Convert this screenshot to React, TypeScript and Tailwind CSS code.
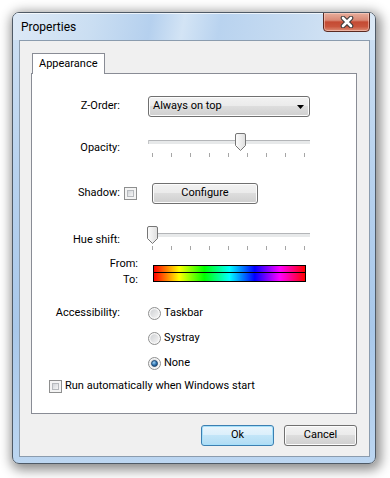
import React from 'react';

const font = "font-['Roboto','Noto_Sans',sans-serif] text-[11px] text-black";

function Slider({ thumbX, id }: { thumbX: number; id: string }) {
  const ticks = Array.from({ length: 9 }, (_, i) => 4 + 19 * i);
  return (
    <svg width="162" height="24" className="overflow-visible">
      <defs>
        <linearGradient id={id} x1="0" y1="0" x2="1" y2="0">
          <stop offset="0" stopColor="#fdfdfd" />
          <stop offset="1" stopColor="#dedede" />
        </linearGradient>
      </defs>
      <rect x="0" y="7" width="162" height="4" fill="#e7e9ea" />
      <line x1="0" y1="7.5" x2="162" y2="7.5" stroke="#b3b5b8" />
      <line x1="0.5" y1="7" x2="0.5" y2="11" stroke="#c4c6c8" />
      {ticks.map((x) => (
        <rect key={x} x={x} y="20" width="1" height="4" fill="#a6a6a6" />
      ))}
      <path
        transform={`translate(${thumbX} 0)`}
        d="M0.5 2 Q0.5 0.5 2 0.5 H9 Q10.5 0.5 10.5 2 V12.5 L5.5 17.5 L0.5 12.5 Z"
        fill={`url(#${id})`}
        stroke="#767676"
      />
    </svg>
  );
}

function Radio({ checked, id }: { checked?: boolean; id: string }) {
  return (
    <svg width="13" height="13">
      <defs>
        <linearGradient id={`${id}o`} x1="0" y1="0" x2="1" y2="1">
          <stop offset="0" stopColor="#cfd1d4" />
          <stop offset="1" stopColor="#f4f4f4" />
        </linearGradient>
        <radialGradient id={`${id}d`} cx="0.4" cy="0.35" r="0.7">
          <stop offset="0" stopColor="#9fd3f5" />
          <stop offset="0.6" stopColor="#2b70ae" />
          <stop offset="1" stopColor="#1a4574" />
        </radialGradient>
      </defs>
      <circle cx="6.5" cy="6.5" r="6" fill="#f7f7f7" stroke="#8e8f8f" />
      <circle cx="6.5" cy="6.5" r="4.2" fill={`url(#${id}o)`} />
      {checked && <circle cx="6.5" cy="6.5" r="3" fill={`url(#${id}d)`} stroke="#1b3f66" strokeWidth="0.8" />}
    </svg>
  );
}

function Checkbox() {
  return (
    <div className="w-[13px] h-[13px] border border-[#8e8f8f] bg-[#f4f4f4] p-[2px]">
      <div className="w-full h-full border border-[#b7babe] bg-[linear-gradient(135deg,#d2d5d9,#f6f6f6)]" />
    </div>
  );
}

function Button({ children, primary, className = '' }: { children: React.ReactNode; primary?: boolean; className?: string }) {
  return (
    <button
      className={
        primary
          ? `h-[21px] rounded-[3px] border border-[#3c7fb1] bg-[linear-gradient(#e9f5fc_0%,#dbeffb_45%,#c2e5f8_50%,#b0dcf4_100%)] shadow-[inset_0_0_0_1px_#a6e0fa] ${className}`
          : `h-[21px] rounded-[3px] border border-[#707070] bg-[linear-gradient(#f2f2f2_0%,#ebebeb_45%,#dddddd_50%,#cfcfcf_100%)] shadow-[inset_0_0_0_1px_#fcfcfc] ${className}`
      }
    >
      {children}
    </button>
  );
}

export default function App() {
  return (
    <div className={`w-[390px] h-[478px] bg-white pl-[12px] pt-[12px] ${font}`}>
      <div className="w-[364px] h-[452px] rounded-[7px] border border-[#4f5a66] shadow-[2px_3px_12px_3px_rgba(0,0,0,0.45)] bg-[linear-gradient(180deg,#cfe1f4_0%,#b8d2ee_35%,#a9c8ea_70%,#bcd6f1_100%)] flex flex-col overflow-hidden">
        <div className="h-[27px] flex justify-between items-start bg-[linear-gradient(100deg,#dde9f6_0%,#cadef2_22%,#b5d0ee_38%,#d3e4f5_47%,#b9d3ef_57%,#c9ddf2_80%,#dce9f6_100%)] shadow-[inset_0_1px_0_rgba(255,255,255,0.7)]">
          <span className="pl-[8px] pt-[6px] text-[12px] leading-[16px]">Properties</span>
          <div className="mr-[5px] -mt-[1px] w-[47px] h-[20px] rounded-b-[4px] border border-[#5a2a22] bg-[linear-gradient(#e8ae9c_0%,#d98975_40%,#c44a33_50%,#c9553d_75%,#dd8e76_100%)] shadow-[inset_0_0_0_1px_rgba(255,220,210,0.5)] flex items-center justify-center">
            <svg width="14" height="12" viewBox="0 0 14 12">
              <path d="M3 2 L11 10 M11 2 L3 10" stroke="#3a3a3a" strokeWidth="4.6" strokeLinecap="round" />
              <path d="M3 2 L11 10 M11 2 L3 10" stroke="#ffffff" strokeWidth="2.6" strokeLinecap="round" />
            </svg>
          </div>
        </div>

        <div className="ml-[6px] w-[351px] h-[417px] border border-[#8b9cae] bg-[#f0f0f0] pt-[12px] pl-[11px] pr-[12px] flex flex-col">
          <div className="h-[20px] flex">
            <div className="relative z-10 ml-[1px] w-[73px] h-[21px] border border-b-0 border-[#898c95] bg-white pl-[6px] pt-[2px] leading-[16px]">
              Appearance
            </div>
          </div>

          <div className="relative w-[326px] h-[341px] border border-[#898c95] bg-white flex flex-col">
            <div className="mt-[22px] flex items-center h-[21px]">
              <span className="w-[88px] text-right">Z-Order:</span>
              <div className="ml-[28px] w-[162px] h-[21px] rounded-[3px] border border-[#707070] bg-[linear-gradient(#f2f2f2_0%,#ebebeb_45%,#dddddd_50%,#cfcfcf_100%)] shadow-[inset_0_0_0_1px_#fcfcfc] flex items-center justify-between pl-[4px] pr-[5px]">
                <span>Always on top</span>
                <svg width="7" height="4" viewBox="0 0 7 4">
                  <path d="M0 0 H7 L3.5 4 Z" fill="#000" />
                </svg>
              </div>
            </div>

            <div className="mt-[16px] flex items-start">
              <span className="w-[88px] text-right mt-[7px] leading-[16px]">Opacity:</span>
              <div className="ml-[28px]">
                <Slider thumbX={87} id="op" />
              </div>
            </div>

            <div className="mt-[26px] flex items-center h-[21px]">
              <span className="w-[88px] text-right">Shadow:</span>
              <div className="ml-[4px]">
                <Checkbox />
              </div>
              <Button className="ml-[15px] w-[106px]">Configure</Button>
            </div>

            <div className="mt-[22px] flex items-start">
              <span className="w-[88px] text-right mt-[6px] leading-[16px]">Hue shift:</span>
              <div className="ml-[28px]">
                <Slider thumbX={-1} id="hue" />
              </div>
            </div>

            <div className="mt-[6px] flex items-start">
              <div className="w-[106px] text-right leading-[16px]">
                <div>From:</div>
                <div>To:</div>
              </div>
              <div className="ml-[15px] mt-[9px] w-[153px] border border-black">
                <div className="h-[7px] border-b border-black bg-[linear-gradient(to_right,#ff0000,#ffff00,#00ff00,#00ffff,#0000ff,#ff00ff,#ff0000)]" />
                <div className="h-[8px] bg-[linear-gradient(to_right,#ff0000,#ffff00,#00ff00,#00ffff,#0000ff,#ff00ff,#ff0000)]" />
              </div>
            </div>

            <div className="mt-[17px] flex items-start">
              <span className="w-[88px] text-right leading-[16px]">Accessibility:</span>
              <div className="ml-[28px] flex flex-col gap-[9px]">
                <div className="h-[16px] flex items-center gap-[3px]">
                  <Radio id="r1" />
                  <span>Taskbar</span>
                </div>
                <div className="h-[16px] flex items-center gap-[3px]">
                  <Radio id="r2" />
                  <span>Systray</span>
                </div>
                <div className="h-[16px] flex items-center gap-[3px]">
                  <Radio id="r3" checked />
                  <span>None</span>
                </div>
              </div>
            </div>

            <div className="mt-[7px] h-[16px] flex items-center ml-[17px] gap-[3px]">
              <Checkbox />
              <span>Run automatically when Windows start</span>
            </div>
          </div>

          <div className="mt-[11px] flex justify-end gap-[10px]">
            <Button primary className="w-[73px]">Ok</Button>
            <Button className="w-[73px]">Cancel</Button>
          </div>
        </div>
      </div>
    </div>
  );
}
